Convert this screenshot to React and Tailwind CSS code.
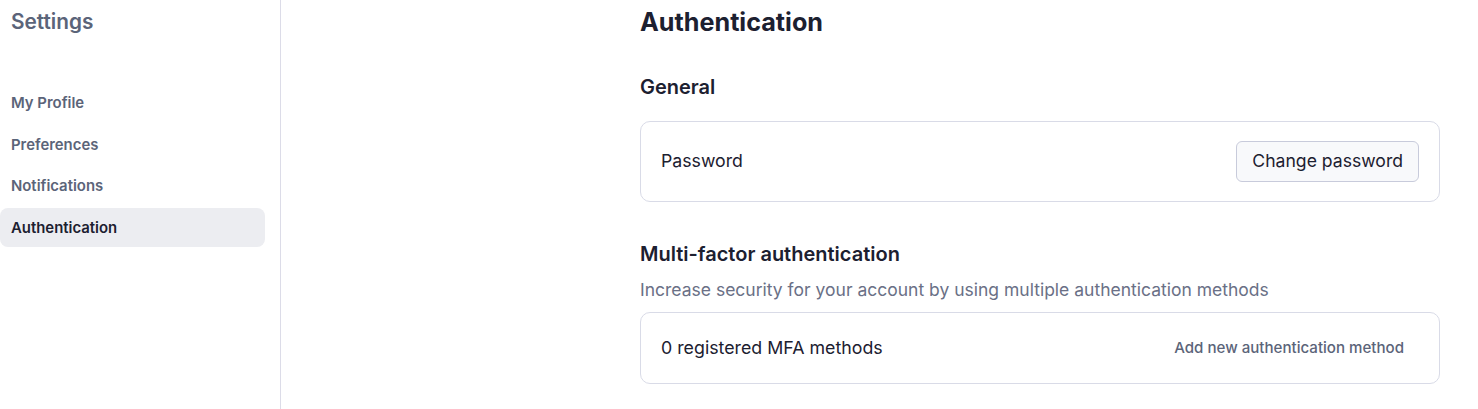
const navItems = ['My Profile', 'Preferences', 'Notifications', 'Authentication'];

const App = () => {
  const active = 'Authentication';

  return (
    <div className="flex min-h-[409px] bg-white text-[#1c2030] font-['Inter',sans-serif]">
      <aside className="w-[281px] shrink-0 border-r border-[#dcdce8] pr-[15px]">
        <h2 className="pl-[11px] pt-[8px] text-[20.8px] leading-[28px] font-semibold text-[#5b6479]">Settings</h2>
        <nav className="mt-[47px] flex flex-col gap-[2.67px]">
          {navItems.map((item) => (
            <a
              key={item}
              href="#"
              className={`block h-[39px] rounded-lg pl-[11px] pt-[1px] text-[14.9px] leading-[39px] font-semibold ${
                item === active ? 'bg-[#ecedf1] text-[#1c2030]' : 'text-[#5b6479]'
              }`}
            >
              {item}
            </a>
          ))}
        </nav>
      </aside>

      <main className="flex-1 pl-[359px] pr-[38px]">
        <div className="w-[800px]">
          <h1 className="pt-[6px] text-[25.2px] leading-[32px] font-bold text-[#1c2030]">Authentication</h1>

          <h3 className="mt-[35px] text-[20px] leading-[28px] font-semibold">General</h3>
          <div className="mt-[20px] flex h-[81px] items-center justify-between rounded-[10px] border border-[#d9dbe7] px-[20px]">
            <span className="text-[17.7px]">Password</span>
            <button className="h-[41px] rounded-md border border-[#c8cbdb] bg-[#f8f9fb] px-[15px] text-[17.6px] text-[#1c2030]">
              Change password
            </button>
          </div>

          <h3 className="mt-[38px] text-[20px] leading-[28px] font-semibold">Multi-factor authentication</h3>
          <p className="mt-[10px] text-[17.5px] leading-[24px] text-[#6a7086]">
            Increase security for your account by using multiple authentication methods
          </p>
          <div className="mt-[10px] flex h-[72px] items-center justify-between rounded-[10px] border border-[#d9dbe7] px-[20px]">
            <span className="text-[17.8px]">0 registered MFA methods</span>
            <button className="px-[15px] text-[15.1px] font-medium text-[#5b6479]">
              Add new authentication method
            </button>
          </div>
        </div>
      </main>
    </div>
  );
};

export default App;
